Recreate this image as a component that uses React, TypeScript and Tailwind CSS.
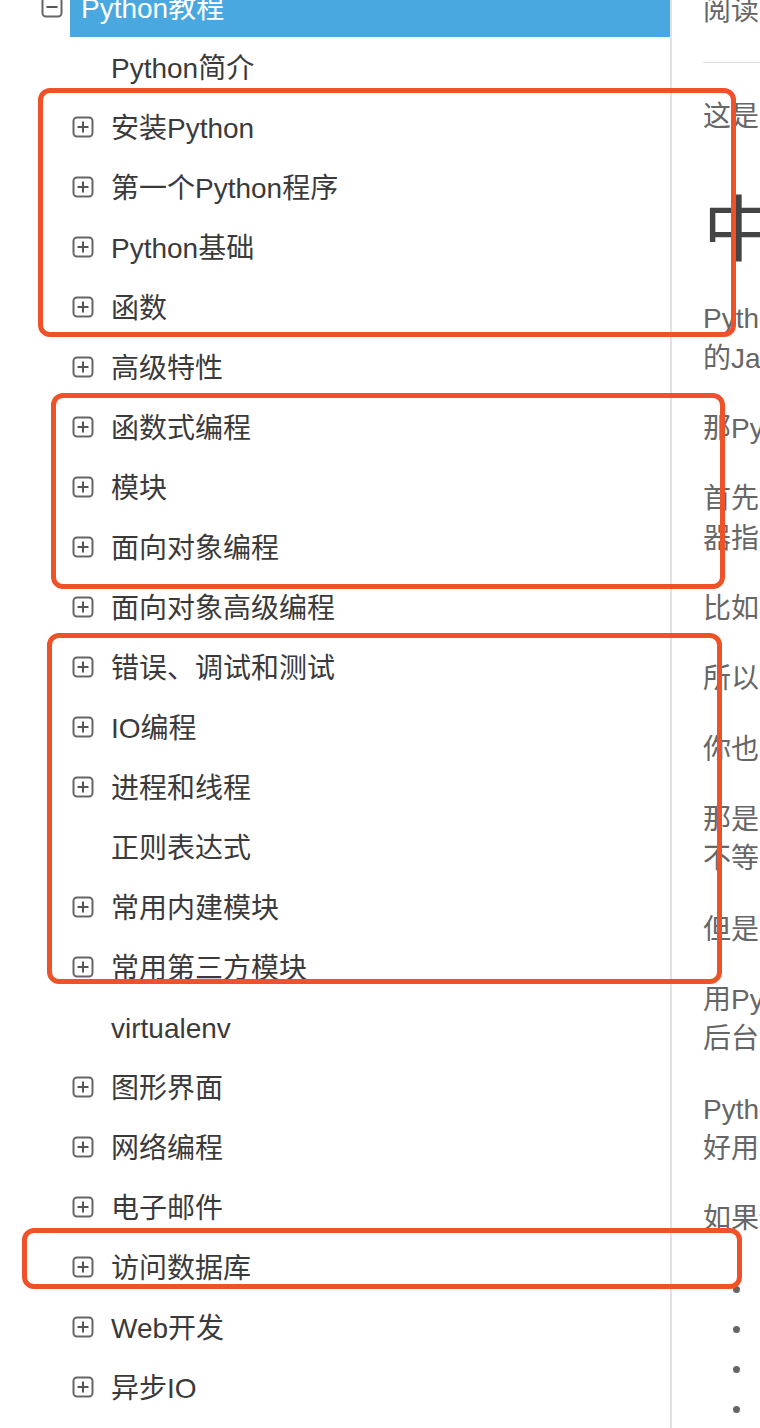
import React from 'react';

type Item = { title: string; expandable: boolean };

const items: Item[] = [
  { title: 'Python简介', expandable: false },
  { title: '安装Python', expandable: true },
  { title: '第一个Python程序', expandable: true },
  { title: 'Python基础', expandable: true },
  { title: '函数', expandable: true },
  { title: '高级特性', expandable: true },
  { title: '函数式编程', expandable: true },
  { title: '模块', expandable: true },
  { title: '面向对象编程', expandable: true },
  { title: '面向对象高级编程', expandable: true },
  { title: '错误、调试和测试', expandable: true },
  { title: 'IO编程', expandable: true },
  { title: '进程和线程', expandable: true },
  { title: '正则表达式', expandable: false },
  { title: '常用内建模块', expandable: true },
  { title: '常用第三方模块', expandable: true },
  { title: 'virtualenv', expandable: false },
  { title: '图形界面', expandable: true },
  { title: '网络编程', expandable: true },
  { title: '电子邮件', expandable: true },
  { title: '访问数据库', expandable: true },
  { title: 'Web开发', expandable: true },
  { title: '异步IO', expandable: true },
];

// paragraphs split by visual line so the wrap points match
const paragraphs: string[][] = [
  ['Python是一种计算机程序设计语言。你可能已经听说过很多种流行的编程语言，比如非常难学的C语言，非常流行', '的Java语言，适合初学者的Basic语言，适合网页编程的JavaScript语言等等。'],
  ['那Python是一种什么语言？'],
  ['首先，我们普及一下编程语言的基础知识。用任何编程语言来开发程序，都是为了让计算机干活，比如下载一个MP3，编写一个文档等等，而计算机干活的CPU只认识机', '器指令，所以，尽管不同的编程语言差异极大，最后都得“翻译”成CPU可以执行的机器指令。'],
  ['比如，完成同一个任务，C语言要写1000行代码，Java只需要写100行，而Python可能只要20行。'],
  ['所以Python是一种相当高级的语言。'],
  ['你也许会问，代码少还不好？代码少的代价是运行速度慢，C程序运行1秒钟，Java程序可能需要2秒，而Python程序可能就需要10秒。'],
  ['那是不是越低级的程序越难学，越高级的程序越简单？表面上来说，是的，但是，在非常高的抽象计算中，高级的Python程序设计也是非常难学的，所以，高级程序语言', '不等于简单。'],
  ['但是，对于初学者和完成普通任务，Python语言是非常简单易用的。'],
  ['用Python可以做什么？可以做日常任务，比如自动备份你的MP3；可以做网站，很多著名的网站包括YouTube就是Python写的；可以做网络游戏的', '后台，很多在线游戏的后台都是Python开发的。总之就是能干很多很多事啦。'],
  ['Python当然也有不能干的事情，比如写操作系统，这个只能用C语言写；写手机应用，只能用Swift/Objective-C（针对iPhone）和Java（针对Android）；写3D游戏，最', '好用C或C++。'],
  ['如果你是小白用户，满足以下条件：'],
];

const bullets = ['会使用电脑，但从来没写过程序；', '还记得初中数学学的方程式和一点点代数知识；', '想从编程小白变成专业的软件架构师；', '每天能抽出半个小时学习。'];

function ToggleIcon({ open }: { open?: boolean }) {
  return (
    <svg width="22" height="22" viewBox="0 0 22 22" fill="none" className="shrink-0">
      <rect x="1.5" y="1.5" width="19" height="19" rx="3.5" stroke="#666" strokeWidth="2" />
      <path d="M5.5 11h11" stroke="#555" strokeWidth="2" />
      {!open && <path d="M11 5.5v11" stroke="#555" strokeWidth="2" />}
    </svg>
  );
}

function Sidebar() {
  return (
    <div className="w-[672px] shrink-0 h-full border-r-2 border-[#e2e2e2]">
      <div className="mt-[-23px]">
        {/* active chapter */}
        <div className="flex items-center h-[60px]">
          <div className="w-[70px] shrink-0 flex justify-end pr-[7px]">
            <ToggleIcon open />
          </div>
          <div className="flex-1 h-full bg-[#4aa8e0] flex items-center pl-[11px] pt-[4px] text-white">Python教程</div>
        </div>
        {items.map((item) => (
          <div key={item.title} className="flex items-center h-[60px] pl-[72px] text-[#3a3a3a]">
            <div className="w-[39px] shrink-0">{item.expandable && <ToggleIcon />}</div>
            <span className="whitespace-nowrap pt-[4px]">{item.title}</span>
          </div>
        ))}
      </div>
    </div>
  );
}

function Article() {
  return (
    <div className="flex-1 min-w-0 pl-[31px] text-[#666] leading-[39.2px] overflow-hidden">
      <div className="mt-[-9px] whitespace-nowrap">阅读: 1838290</div>
      <div className="mt-[32px] h-px bg-[#ddd]" />
      <p className="mt-[34px] whitespace-nowrap">这是小白的Python新手教程，具有如下特点：</p>
      <h1 className="mt-[51px] text-[72px] leading-[86px] text-[#444] whitespace-nowrap">中文，免费，零起点</h1>
      <div className="mt-[26px]">
        {paragraphs.map((lines, i) => (
          <p key={i} className="mb-[31.2px]">
            {lines.map((line, j) => (
              <span key={j} className="block whitespace-nowrap">
                {line}
              </span>
            ))}
          </p>
        ))}
        <ul className="mt-[0.6px]">
          {bullets.map((b) => (
            <li key={b} className="flex items-center h-[40px] whitespace-nowrap">
              <span className="ml-[30px] mr-[20px] w-[7px] h-[7px] rounded-full bg-[#666] shrink-0" />
              {b}
            </li>
          ))}
        </ul>
      </div>
    </div>
  );
}

export default function App() {
  return (
    <div
      className="relative w-[760px] h-[1428px] overflow-hidden bg-white flex text-[28px]"
      style={{ fontFamily: '"Liberation Sans", "Noto Sans CJK SC", sans-serif' }}
    >
      <Sidebar />
      <Article />

      {/* annotation boxes */}
      <div className="absolute left-[38px] top-[88px] w-[698px] h-[249px] border-[5px] border-[#ef5128] rounded-[12px]" />
      <div className="absolute left-[51px] top-[393px] w-[674px] h-[196px] border-[5px] border-[#ef5128] rounded-[12px]" />
      <div className="absolute left-[47px] top-[633px] w-[675px] h-[351px] border-[5px] border-[#ef5128] rounded-[12px]" />
      <div className="absolute left-[22px] top-[1228px] w-[720px] h-[61px] border-[5px] border-[#ef5128] rounded-[12px]" />
    </div>
  );
}
